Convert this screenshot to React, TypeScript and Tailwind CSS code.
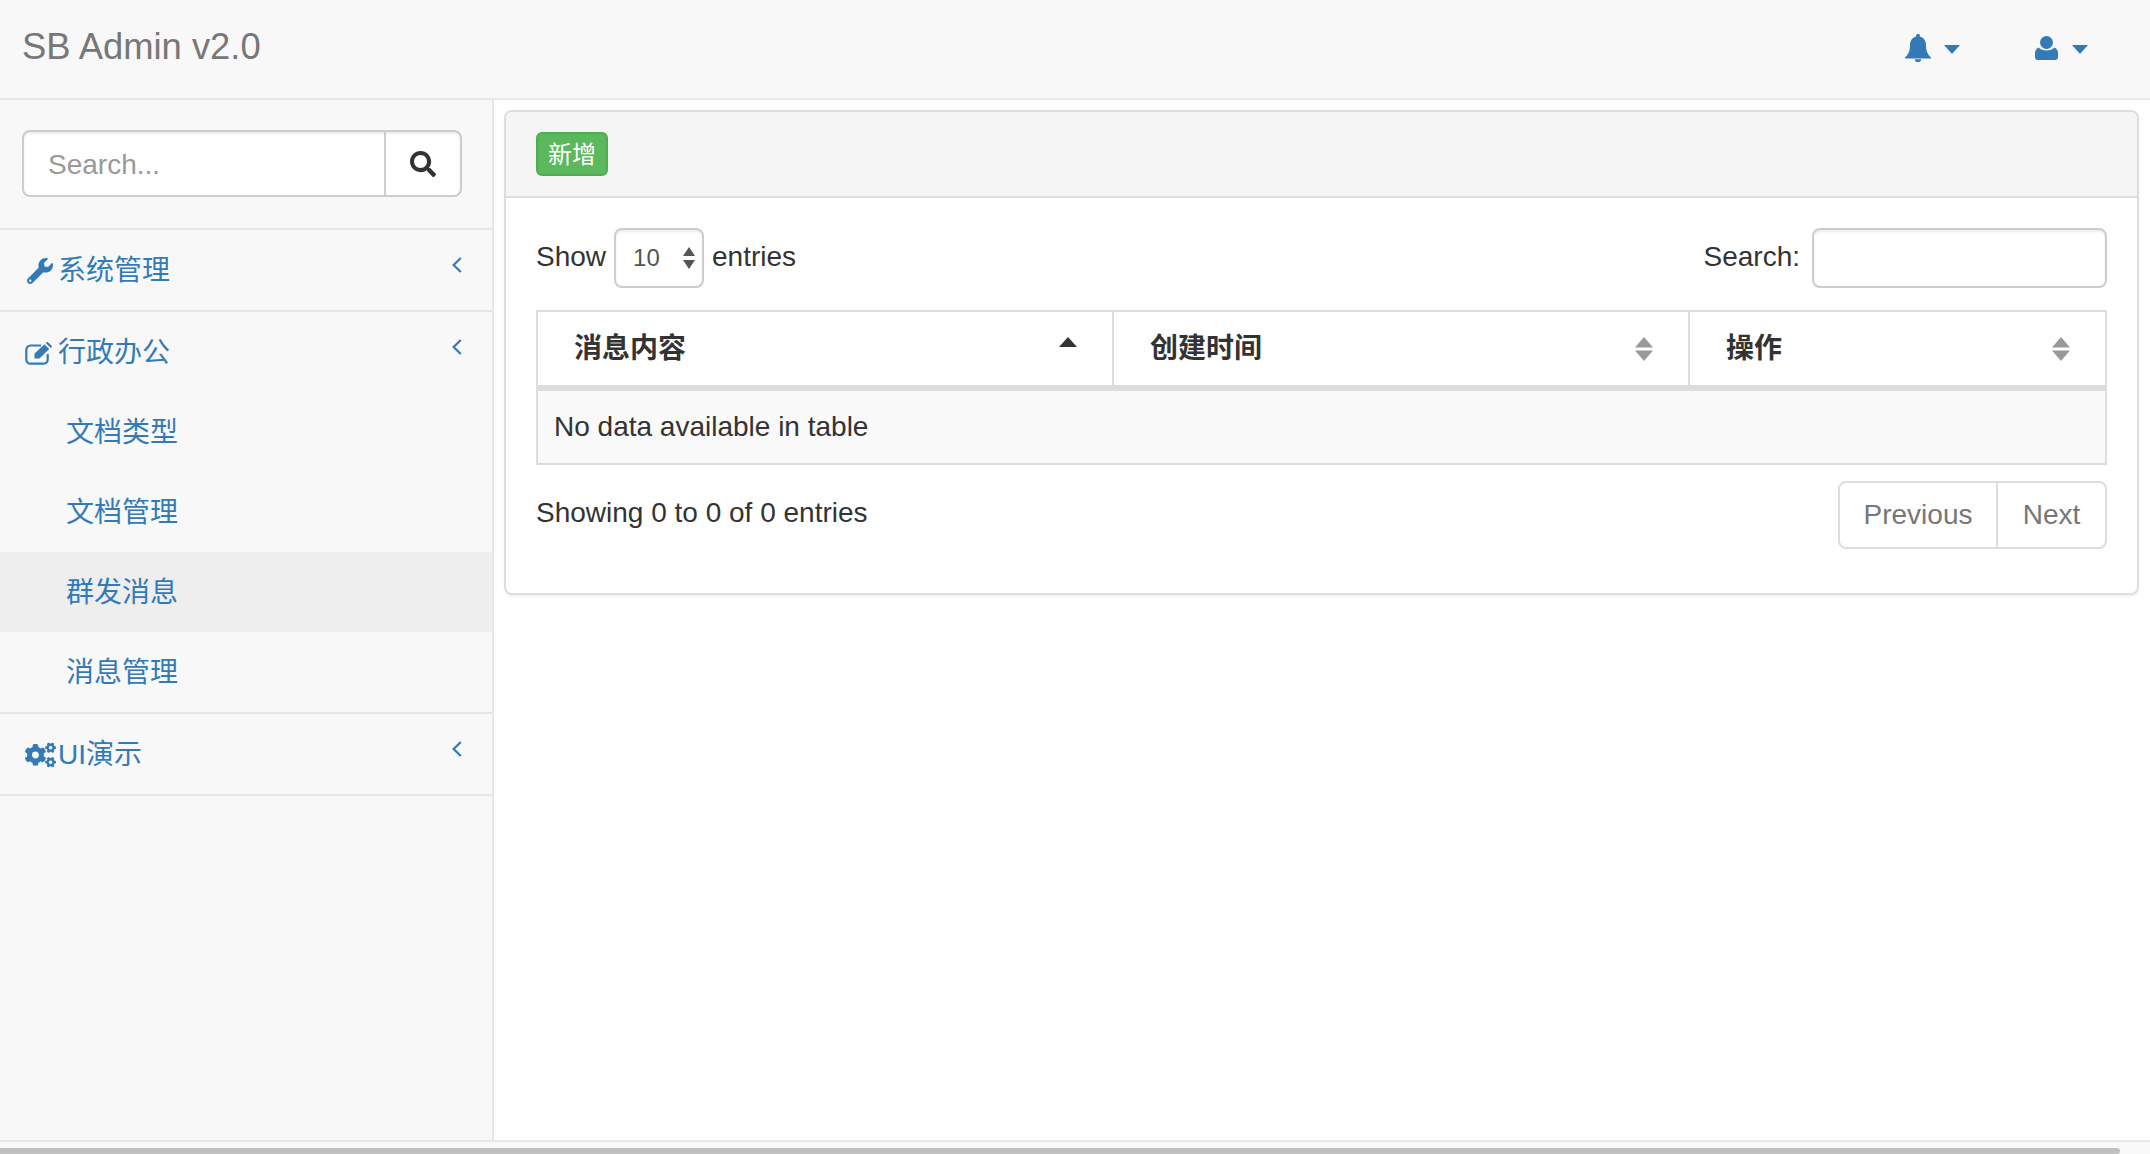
import { FaCogs, FaSearch, FaWrench } from "react-icons/fa";

const font = "font-['Liberation_Sans','Noto_Sans_CJK_SC',sans-serif]";

function Caret({ gap }: { gap: string }) {
  return <span className={`${gap} h-0 w-0 border-x-[8px] border-t-[9px] border-x-transparent border-t-[#337ab7]`} />;
}

function BellIcon() {
  return (
    <svg viewBox="0 0 26 28" className="mb-[2px] h-[28px] w-[26px] fill-[#337ab7]">
      <path d="M13 0a1.900 1.900 0 0 1 1.800 2.400C19 3.400 21 7 21 11c0 6 1.500 9 5 12.500v1H0v-1C3.500 20 5 17 5 11c0-4 2-7.600 6.200-8.600A1.900 1.900 0 0 1 13 0z" />
      <path d="M9.800 25.200a3.200 2.800 0 0 0 6.400 0z" />
    </svg>
  );
}

function UserIcon() {
  return (
    <svg viewBox="0 0 23 24" className="mb-[2px] h-[24px] w-[23px] fill-[#337ab7]">
      <circle cx="11.500" cy="6.500" r="6.500" />
      <path d="M3.500 11.500C5.500 13.500 8.200 14.500 11.500 14.500S17.500 13.500 19.500 11.500C21.500 12.500 23 14.500 23 17V21C23 22.800 21.800 24 20 24H3C1.200 24 0 22.800 0 21V17C0 14.500 1.500 12.500 3.500 11.500z" />
    </svg>
  );
}

function EditIcon() {
  return (
    <svg viewBox="0 0 27 23" className="h-[23px] w-[27px] text-[#337ab7]">
      <path d="M16 3.500H5.500a4.200 4.200 0 0 0-4.200 4.200v9.800a4.200 4.200 0 0 0 4.200 4.200h13a4.200 4.200 0 0 0 4.200-4.200v-5.500" fill="none" stroke="currentColor" strokeWidth="2.200" />
      <path d="M9.500 16.500v-5L19.500 2.200l4.700 4.700-9.700 9.600z" fill="currentColor" />
      <path d="M20.800 1l.9-.8a1 1 0 0 1 1.300 0l3.600 3.500a1 1 0 0 1 0 1.300l-.9 1z" fill="currentColor" />
    </svg>
  );
}

function AngleIcon() {
  return (
    <svg viewBox="0 0 10 16" className="mb-[12px] h-[16px] w-[10px] fill-none stroke-[#337ab7] stroke-[2.200]">
      <path d="M8.800 1L1.600 8l7.200 7" />
    </svg>
  );
}

function SortIcon() {
  return (
    <svg viewBox="0 0 18 24" className="h-[24px] w-[18px] shrink-0 fill-[#999]">
      <path d="M9 0l9 10.500H0zM0 13.500h18L9 24z" />
    </svg>
  );
}

function NavItem({ icon, label, children }: { icon: React.ReactNode; label: string; children?: React.ReactNode }) {
  return (
    <div className="border-b-2 border-[#e7e7e7]">
      <div className="flex h-[80px] items-center pl-[25px] pr-[30px] pt-[2px] text-[#337ab7]">
        <span className="flex w-[33px] shrink-0 items-center">{icon}</span>
        <span className="flex-1">{label}</span>
        <AngleIcon />
      </div>
      {children}
    </div>
  );
}

function SubItem({ label, active }: { label: string; active?: boolean }) {
  return (
    <div className={`flex h-[80px] items-center pl-[66px] pt-[2px] text-[#337ab7] ${active ? "bg-[#eeeeee]" : ""}`}>
      {label}
    </div>
  );
}

function HeaderCell({ label, sorted }: { label: string; sorted?: boolean }) {
  return (
    <th className="h-[77px] border-2 border-b-[6px] border-[#dddddd] p-0 pl-[36px] pr-[35px] text-left font-bold text-[#333333]">
      <div className="flex items-center justify-between">
        <span>{label}</span>
        {sorted ? (
          <svg viewBox="0 0 18 10" className="mb-[14px] h-[10px] w-[18px] fill-[#333333]">
            <path d="M9 0l9 10H0z" />
          </svg>
        ) : (
          <SortIcon />
        )}
      </div>
    </th>
  );
}

export default function App() {
  return (
    <div className={`flex h-[1154px] w-[2150px] flex-col overflow-hidden bg-white text-[28px] text-[#333333] ${font}`}>
      {/* Top bar */}
      <header className="flex h-[100px] shrink-0 items-center justify-between border-b-2 border-[#e7e7e7] bg-[#f8f8f8] pl-[22px] pr-[62px]">
        <span className="mb-[3px] text-[36.400px] text-[#777777]">SB Admin v2.0</span>
        <div className="flex items-center">
          <div className="flex items-center">
            <BellIcon />
            <Caret gap="ml-[13px]" />
          </div>
          <div className="ml-[75px] flex items-center">
            <UserIcon />
            <Caret gap="ml-[14px]" />
          </div>
        </div>
      </header>

      <div className="flex min-h-0 flex-1">
        {/* Sidebar */}
        <aside className="w-[494px] shrink-0 border-r-2 border-[#e7e7e7] bg-[#f8f8f8]">
          <div className="border-b-2 border-[#e7e7e7] px-[22px] pb-[31px] pt-[30px]">
            <div className="flex h-[67px] w-[440px] overflow-hidden rounded-[8px] border-2 border-[#cccccc] bg-white shadow-[inset_0_2px_2px_rgba(0,0,0,0.075)]">
              <input
                placeholder="Search..."
                className="min-w-0 flex-1 px-[24px] pt-[2px] text-[28px] outline-none placeholder:text-[#999999]"
              />
              <button className="flex w-[76px] items-center justify-center border-l-2 border-[#cccccc]">
                <FaSearch className="h-[26px] w-[26px] text-[#333333]" />
              </button>
            </div>
          </div>
          <NavItem icon={<FaWrench className="ml-[2px] h-[26px] w-[26px]" />} label="系统管理" />
          <NavItem icon={<EditIcon />} label="行政办公">
            <SubItem label="文档类型" />
            <SubItem label="文档管理" />
            <SubItem label="群发消息" active />
            <SubItem label="消息管理" />
          </NavItem>
          <NavItem icon={<FaCogs className="h-[28px] w-[31px]" />} label="UI演示" />
        </aside>

        {/* Main */}
        <main className="flex-1 border-r-2 border-[#e7e7e7] pl-[10px] pr-[11px] pt-[10px]">
          <section className="rounded-[8px] border-2 border-[#dddddd] shadow-[0_2px_2px_rgba(0,0,0,0.05)]">
            <div className="h-[86px] rounded-t-[6px] border-b-2 border-[#dddddd] bg-[#f5f5f5] pl-[30px] pt-[20px]">
              <button className="flex h-[44px] w-[72px] items-center justify-center rounded-[6px] border-2 border-[#4cae4c] bg-[#5cb85c] pt-[2px] text-[24px] text-white">
                新增
              </button>
            </div>
            <div className="px-[30px] pb-[44px] pt-[30px]">
              <div className="mb-[22px] flex h-[60px] items-center justify-between">
                <div className="flex items-center pb-[2px]">
                  <span>Show</span>
                  <div className="relative mx-[8px] mt-[2px] h-[60px] w-[90px]">
                    <select className="h-full w-full appearance-none rounded-[8px] border-2 border-[#cccccc] bg-white pl-[17px] text-[24px] text-[#555555] shadow-[inset_0_2px_2px_rgba(0,0,0,0.075)] outline-none">
                      <option>10</option>
                    </select>
                    <svg viewBox="0 0 12 22" className="absolute right-[9px] top-[19px] h-[22px] w-[12px] fill-[#555555]">
                      <path d="M6 0l6 9H0zM0 13h12l-6 9z" />
                    </svg>
                  </div>
                  <span>entries</span>
                </div>
                <div className="flex items-center pb-[2px]">
                  <span className="mr-[12px]">Search:</span>
                  <input className="mt-[2px] h-[60px] w-[295px] rounded-[8px] border-2 border-[#cccccc] bg-white shadow-[inset_0_2px_2px_rgba(0,0,0,0.075)] outline-none" />
                </div>
              </div>

              <table className="w-[1569px] table-fixed border-collapse">
                <colgroup>
                  <col className="w-[576px]" />
                  <col className="w-[576px]" />
                  <col className="w-[417px]" />
                </colgroup>
                <thead>
                  <tr>
                    <HeaderCell label="消息内容" sorted />
                    <HeaderCell label="创建时间" />
                    <HeaderCell label="操作" />
                  </tr>
                </thead>
                <tbody>
                  <tr>
                    <td colSpan={3} className="h-[76px] border-2 border-[#dddddd] bg-[#f9f9f9] pl-[16px]">
                      No data available in table
                    </td>
                  </tr>
                </tbody>
              </table>

              <div className="mt-[16px] flex items-start justify-between">
                <span className="mt-[11px]">Showing 0 to 0 of 0 entries</span>
                <div className="flex h-[68px] rounded-[8px] border-2 border-[#dddddd] text-[#777777]">
                  <span className="flex w-[158px] items-center justify-center border-r-2 border-[#dddddd]">Previous</span>
                  <span className="flex w-[107px] items-center justify-center">Next</span>
                </div>
              </div>
            </div>
          </section>
        </main>
      </div>

      {/* Horizontal scrollbar */}
      <div className="h-[14px] shrink-0 border-t-2 border-[#e7e7e7] bg-[#f9f9f9] pt-[6px]">
        <div className="h-[6px] w-[2120px] rounded-r-[6px] bg-[#c0c0c0]" />
      </div>
    </div>
  );
}
